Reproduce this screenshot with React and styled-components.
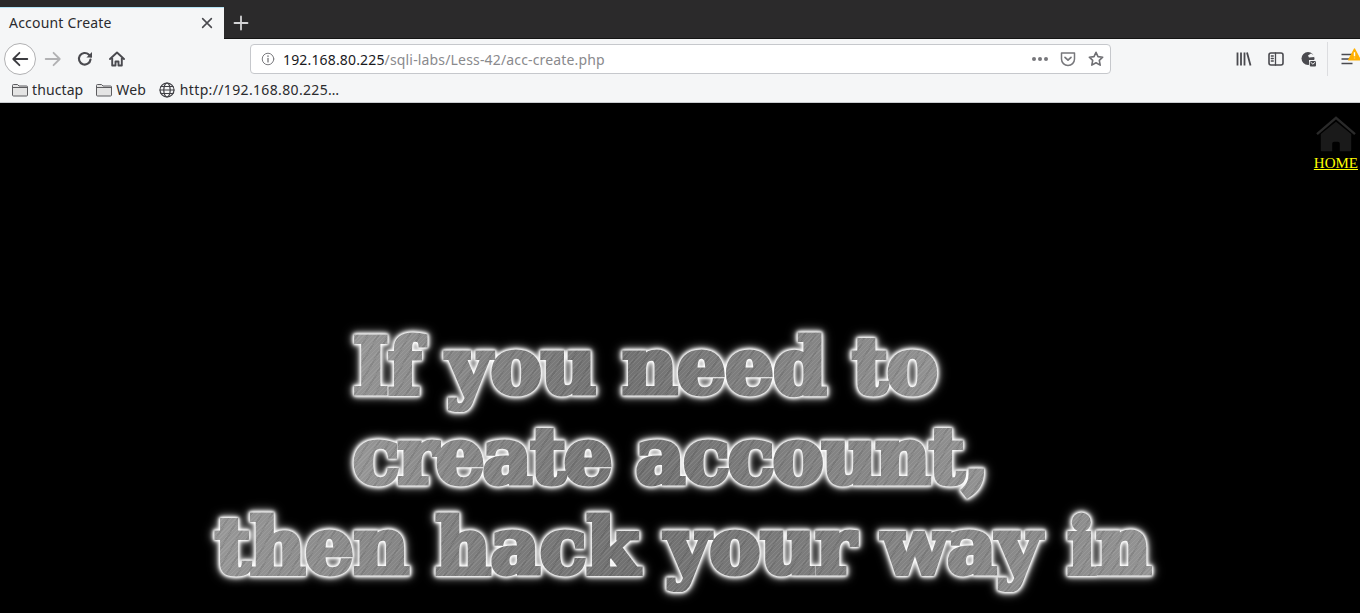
import React from "react";
import styled, { createGlobalStyle } from "styled-components";

const GlobalStyle = createGlobalStyle`
  html, body {
    margin: 0;
    height: 100%;
    overflow: hidden;
    background: #000;
  }
  * { box-sizing: border-box; }
`;

const Icon = ({ size = 16, children, color = "#4a4a4f" }) => (
  <svg width={size} height={size} viewBox="0 0 16 16" fill="none" stroke={color} strokeWidth="1.6" strokeLinecap="round" strokeLinejoin="round">
    {children}
  </svg>
);

const FolderIcon = () => (
  <svg width="16" height="14" viewBox="0 0 16 14" fill="#e4e4e4" stroke="#5d5d60" strokeWidth="1">
    <path d="M.5 2.5a1 1 0 0 1 1-1h4l1.5 1.5h7.5a1 1 0 0 1 1 1v8a1 1 0 0 1-1 1h-13a1 1 0 0 1-1-1z" />
    <path d="M.5 4.5h15" fill="none" />
  </svg>
);

const GlobeIcon = () => (
  <Icon color="#3f3f44" size={16}>
    <g strokeWidth="1.2">
      <circle cx="8" cy="8" r="7" />
      <ellipse cx="8" cy="8" rx="3.2" ry="7" />
      <path d="M1 8h14M2 4.5h12M2 11.5h12" />
    </g>
  </Icon>
);

const App = () => (
  <>
    <GlobalStyle />
    <Chrome>
      <TabStrip>
        <Tab>
          <TabTitle>Account Create</TabTitle>
          <Icon size={14} color="#4a4a4f">
            <path d="M3 3l10 10M13 3L3 13" strokeWidth="1.8" />
          </Icon>
        </Tab>
        <NewTab>
          <Icon size={16} color="#d4d4d6">
            <path d="M8 1.5v13M1.5 8h13" strokeWidth="1.8" />
          </Icon>
        </NewTab>
      </TabStrip>
      <NavBar>
        <BackButton>
          <Icon size={18} color="#3c3c40">
            <path d="M14.5 8H2M7.5 2.5L2 8l5.5 5.5" />
          </Icon>
        </BackButton>
        <NavButton>
          <Icon size={18} color="#b1b1b3">
            <path d="M1.5 8H14M8.5 2.5L14 8l-5.5 5.5" />
          </Icon>
        </NavButton>
        <NavButton>
          <Icon>
            <path d="M13.5 8.5A5.8 5.8 0 1 1 11.8 3.6L14 5.5" strokeWidth="2.1" />
            <path d="M15 1v5.6H9.400" fill="#4a4a4f" stroke="none" />
          </Icon>
        </NavButton>
        <NavButton>
          <Icon>
            <path d="M1 8l7-6.500L15 8M3.200 7v7.500h3.300v-4h3v4h3.300V7" strokeWidth="1.900" />
          </Icon>
        </NavButton>
        <UrlBar>
          <InfoIcon>
            <Icon size={14} color="#77777b">
              <g strokeWidth="1.1">
                <circle cx="8" cy="8" r="6.6" />
                <path d="M8 7.3v4" strokeWidth="1.5" />
                <path d="M8 4.5v.3" strokeWidth="1.7" />
              </g>
            </Icon>
          </InfoIcon>
          <Url>
            <strong>192.168.80.225</strong>/sqli-labs/Less-42/acc-create.php
          </Url>
          <UrlActions>
            <Dots>
              <i /><i /><i />
            </Dots>
            <Icon color="#77777b">
              <path d="M1.5 2h13v6a6.5 6.5 0 0 1-13 0z" strokeWidth="1.5" />
              <path d="M5 6.3l3 2.9 3-2.9" strokeWidth="1.7" />
            </Icon>
            <Icon color="#6f6f73">
              <path d="M8 1.3l2 4.3 4.7.6-3.4 3.2.9 4.700L8 11.800l-4.200 2.300.9-4.700L1.300 6.200l4.700-.6z" />
            </Icon>
          </UrlActions>
        </UrlBar>
        <Tools>
          <NavButton>
            <Icon>
              <path d="M1.500 1.500v13M5 1.500v13M8.500 1.500v13M11 1.500l3.500 13" strokeLinecap="butt" strokeWidth="1.800" />
            </Icon>
          </NavButton>
          <NavButton>
            <Icon>
              <rect x="1" y="2" width="14" height="12" rx="2" />
              <path d="M7.500 2v12M3.300 5h2M3.300 7.500h2M3.300 10h2" strokeWidth="1.300" />
            </Icon>
          </NavButton>
          <NavButton>
            <Icon>
              <circle cx="8" cy="7.500" r="6.500" fill="#4a4a4f" stroke="none" />
              <path d="M11 2.500l3.500 2v1.500L9 6.500 8 4.500z" fill="#f5f6f7" stroke="none" />
              <rect x="9" y="9" width="7" height="7" fill="#f5f6f7" stroke="none" />
              <rect x="9.800" y="10" width="6.200" height="5.500" rx="1" fill="#4a4a4f" stroke="none" />
              <path d="M10.800 11.300l2.100 1.900 2.100-1.900" stroke="#f5f6f7" strokeWidth="1" />
            </Icon>
          </NavButton>
          <Divider />
          <MenuButton>
            <Icon>
              <path d="M2.500 3.500h11M2.500 8h11M2.500 12.500h11" strokeLinecap="butt" strokeWidth="1.600" />
            </Icon>
            <WarningBadge viewBox="0 0 12 12">
              <path d="M6 .8l5.500 10.200H.5z" fill="#ffb000" stroke="#ffb000" strokeLinejoin="round" />
              <path d="M6 4v3.500M6 9v.4" stroke="#fff" strokeWidth="1.300" />
            </WarningBadge>
          </MenuButton>
        </Tools>
      </NavBar>
      <BookmarksBar>
        <Bookmark $gap={13} $tracking={0.1}>
          <FolderIcon />
          thuctap
        </Bookmark>
        <Bookmark $gap={13} $tracking={0.1}>
          <FolderIcon />
          Web
        </Bookmark>
        <Bookmark $tracking={0.35} $iconGap={5}>
          <GlobeIcon />
          http://192.168.80.225…
        </Bookmark>
      </BookmarksBar>
    </Chrome>
    <Page>
      <HomeLink>
        <svg width="42" height="38" viewBox="0 0 44 40">
          <path d="M2 19L22 2l20 17" fill="none" stroke="#2a2a2a" strokeWidth="2.500" />
          <path d="M6 19L22 6l16 13v17a1 1 0 0 1-1 1H26v-8a2 2 0 0 0-2-2h-4a2 2 0 0 0-2 2v8H7a1 1 0 0 1-1-1z" fill="#1a1a1a" />
        </svg>
        <HomeText href="#">HOME</HomeText>
      </HomeLink>
      <Headline>
        <HeadlineLine $indent={343} $tracking={-0.3}>If you need to</HeadlineLine>
        <HeadlineLine $indent={343} $tracking={-1.6}>create account,</HeadlineLine>
        <HeadlineLine $indent={205} $tracking={0}>then hack your way in</HeadlineLine>
      </Headline>
    </Page>
  </>
);

export default App;

const Chrome = styled.header`
  font-family: "Noto Sans", "Open Sans", sans-serif;
  color: #2b2b2e;
`;

const TabStrip = styled.div`
  display: flex;
  height: 39px;
  padding-top: 7px;
  background: #2b2a2b;
  border-bottom: 1px solid #141414;
`;

const Tab = styled.div`
  width: 224px;
  height: 32px;
  padding: 0 10px 2px 9px;
  display: flex;
  align-items: center;
  justify-content: space-between;
  background: #f5f6f7;
  border-top: 1px solid #b4e3f5;
`;

const TabTitle = styled.span`
  font-size: 14px;
  letter-spacing: 0.2px;
`;

const NewTab = styled.div`
  width: 34px;
  display: flex;
  align-items: center;
  justify-content: center;
`;

const NavBar = styled.nav`
  height: 39px;
  padding-left: 4px;
  display: flex;
  align-items: center;
  background: #f5f6f7;
`;

const NavButton = styled.div`
  position: relative;
  width: 32px;
  height: 32px;
  flex: none;
  display: flex;
  align-items: center;
  justify-content: center;
`;

const BackButton = styled(NavButton)`
  margin-right: 1px;
  background: #fff;
  border: 1px solid #b1b1b3;
  border-radius: 50%;
`;

const UrlBar = styled.div`
  width: 861px;
  height: 30px;
  margin-left: 117px;
  padding: 0 6px 0 10px;
  display: flex;
  align-items: center;
  background: #fff;
  border: 1px solid #c6c8cc;
  border-radius: 4px;
`;

const InfoIcon = styled.span`
  display: flex;
  width: 22px;
`;

const Url = styled.span`
  flex: 1;
  padding-top: 1px;
  font-size: 14px;
  letter-spacing: 0.16px;
  color: #8a8a8d;
  white-space: nowrap;

  strong {
    font-weight: 400;
    color: #1a1a1e;
  }
`;

const UrlActions = styled.div`
  display: flex;
  align-items: center;
  gap: 12px;
`;

const Dots = styled.span`
  display: flex;
  gap: 2px;

  i {
    width: 4px;
    height: 4px;
    border-radius: 50%;
    background: #77777b;
  }
`;

const Tools = styled.div`
  margin-left: 117px;
  display: flex;
  align-items: center;
`;

const Divider = styled.div`
  width: 1px;
  height: 34px;
  margin-left: 3px;
  background: #dcdde0;
`;

const MenuButton = styled(NavButton)`
  width: 29px;
  padding-left: 5px;
  margin-left: 2px;
`;

const WarningBadge = styled.svg`
  position: absolute;
  top: 5px;
  right: -2px;
  width: 13px;
  height: 13px;
`;

const BookmarksBar = styled.div`
  height: 25px;
  padding: 0 0 1px 12px;
  display: flex;
  align-items: center;
  font-size: 14px;
  background: #f5f6f7;
  border-bottom: 1px solid #c9cbcf;
`;

const Bookmark = styled.div`
  display: flex;
  align-items: center;
  gap: ${({ $iconGap }) => $iconGap || 4}px;
  letter-spacing: ${({ $tracking }) => $tracking || 0}px;
  margin-right: ${({ $gap }) => $gap || 0}px;
`;

const Page = styled.main`
  height: 510px;
  padding: 13px 2px 0 0;
  overflow: hidden;
  background: #000;
  display: flex;
  flex-direction: column;
`;

const HomeLink = styled.div`
  align-self: flex-end;
  display: flex;
  flex-direction: column;
  align-items: center;
  line-height: 0;
`;

const HomeText = styled.a`
  font: 15px/18px "Liberation Serif", serif;
  color: #ffff00;
  text-decoration: underline;
`;

const Headline = styled.div`
  margin-top: 150px;
  display: flex;
  flex-direction: column;
`;

const HeadlineLine = styled.div`
  margin-left: ${({ $indent }) => $indent}px;
  width: fit-content;
  padding: 0 10px;
  height: 90px;
  font: 900 76px/90px "DejaVu Serif", "Liberation Serif", serif;
  letter-spacing: ${({ $tracking }) => $tracking}px;
  white-space: nowrap;
  color: transparent;
  -webkit-text-stroke: 5px transparent;
  background-image:
    repeating-linear-gradient(135deg, rgba(255, 255, 255, 0.09) 0 1px, transparent 1px 3px),
    repeating-linear-gradient(120deg, rgba(0, 0, 0, 0.08) 0 2px, transparent 2px 9px),
    linear-gradient(100deg, #989898, #707070 45%, #949494);
  -webkit-background-clip: text;
  background-clip: text;
  filter: drop-shadow(0 0 1px #fff) drop-shadow(0 0 1.5px #fff) drop-shadow(0 0 2px #fff) drop-shadow(0 0 4px rgba(255, 255, 255, 0.6));
`;
